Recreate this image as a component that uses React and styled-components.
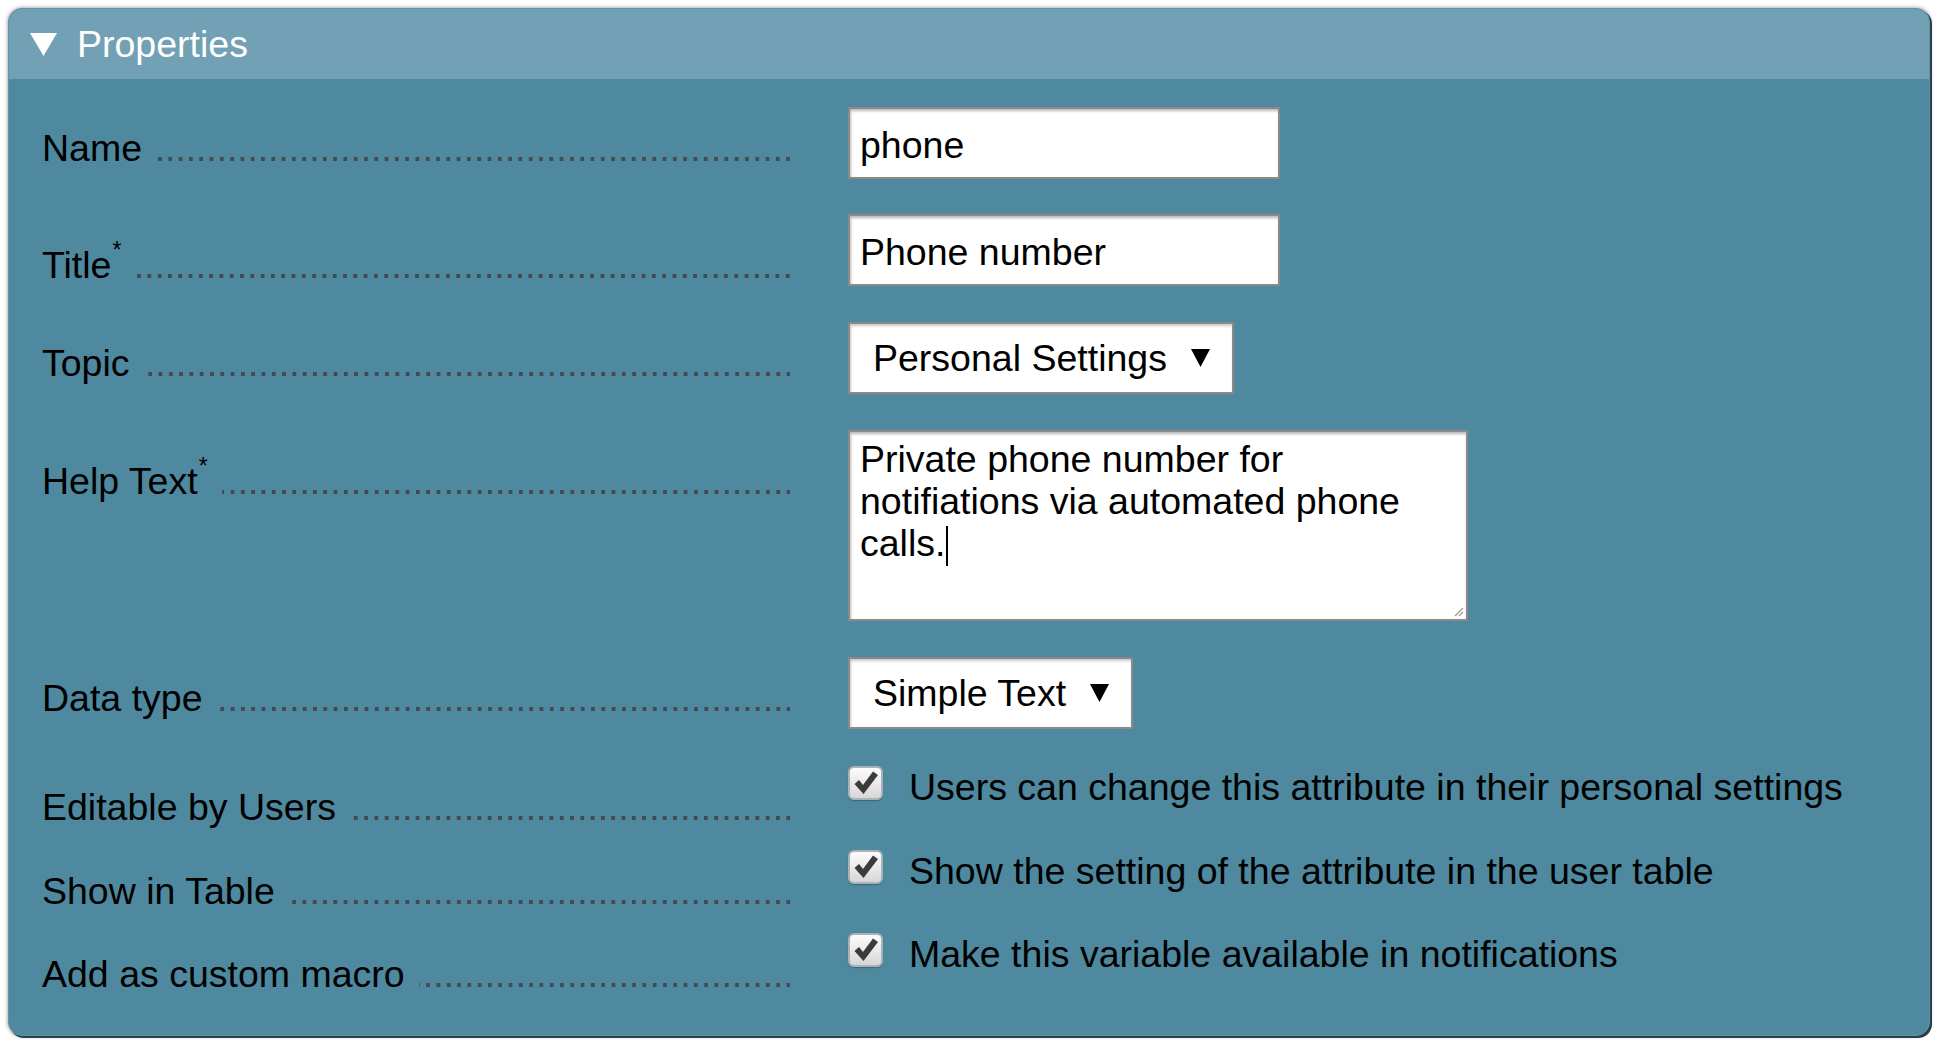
import styled, { createGlobalStyle } from 'styled-components';

const FONT = `"Liberation Sans", Arial, Helvetica, sans-serif`;

const GlobalStyle = createGlobalStyle`
  html, body {
    margin: 0;
    background: #ffffff;
    font-family: ${FONT};
  }
`;

const Panel = styled.section`
  margin: 8px;
  width: 1922px;
  box-sizing: border-box;
  border-radius: 14px;
  background: #4e899f;
  border: 1px solid #6892a3;
  box-shadow: 2px 2px 0 #24424d, 0 0 4px rgba(0, 0, 0, 0.45);
  overflow: hidden;
`;

const Header = styled.header`
  height: 70px;
  display: flex;
  align-items: center;
  gap: 20px;
  padding-left: 21px;
  background: #72a0b4;
  color: #ffffff;
  font-size: 37.5px;
`;

const Body = styled.div`
  display: flex;
  flex-direction: column;
  padding: 28px 40px 40px 33px;
`;

const Row = styled.div`
  display: flex;
  align-items: flex-start;
  margin-top: ${p => p.$gap || 0}px;
`;

const Label = styled.div`
  width: 748px;
  flex: none;
  display: flex;
  align-items: baseline;
  padding-top: ${p => (p.$starred ? 30 : 20)}px;
  font-size: 37.5px;
  line-height: 42px;
  color: #000;
  white-space: nowrap;
`;

const Star = styled.sup`
  font-size: 23px;
  line-height: 0;
  vertical-align: 20px;
  margin-left: 1px;
`;

const Leader = styled.span`
  flex: 1;
  height: 4px;
  margin-left: 14px;
  background-image: linear-gradient(90deg, transparent 0 6.3px, #444a4d 6.3px);
  background-size: 10.3px 4px;
  background-repeat: repeat-x;
  background-position: right bottom;
`;

const Control = styled.div`
  margin-left: 58px;
`;

const TextInput = styled.input`
  box-sizing: border-box;
  width: 432px;
  height: 72px;
  padding: 4px 10px 0;
  border: 2px solid #8a8a8a;
  background: #fff;
  box-shadow: inset 1px 2px 3px rgba(0, 0, 0, 0.28);
  font-family: ${FONT};
  font-size: 37.5px;
  color: #000;
  outline: none;
`;

const Select = styled.button`
  box-sizing: border-box;
  width: ${p => p.$width}px;
  height: 72px;
  display: flex;
  align-items: center;
  justify-content: space-between;
  padding: 0 22px 0 23px;
  border: 2px solid #8a8a8a;
  background: #fff;
  box-shadow: inset 1px 2px 3px rgba(0, 0, 0, 0.22);
  font-family: ${FONT};
  font-size: 37.5px;
  color: #000;
  cursor: pointer;
`;

const TextArea = styled.div`
  position: relative;
  box-sizing: border-box;
  width: 620px;
  height: 191px;
  padding: 6px 10px;
  border: 2px solid #8a8a8a;
  background: #fff;
  box-shadow: inset 1px 2px 3px rgba(0, 0, 0, 0.28);
  font-size: 37.5px;
  line-height: 42px;
  color: #000;
  white-space: pre-wrap;
`;

const Caret = styled.span`
  display: inline-block;
  width: 2px;
  height: 40px;
  margin-left: 1px;
  background: #000;
  vertical-align: -10px;
`;

const Grip = styled.svg`
  position: absolute;
  right: 2px;
  bottom: 2px;
`;

const CheckRow = styled.label`
  display: flex;
  align-items: flex-start;
  gap: 26px;
  font-size: 37.5px;
  line-height: 42px;
  color: #000;
  white-space: nowrap;
`;

const Box = styled.span`
  box-sizing: border-box;
  width: 35px;
  height: 34px;
  flex: none;
  border: 2px solid #a9b2b6;
  border-radius: 6px;
  background: linear-gradient(180deg, #fbfbfb 0%, #e9e9e9 55%, #d6d6d6 100%);
  box-shadow: 0 1px 1px rgba(0, 0, 0, 0.25);
  display: flex;
  align-items: center;
  justify-content: center;
`;

function Arrow() {
  return (
    <svg width="19" height="18" viewBox="0 0 19 18">
      <polygon points="0,0 19,0 9.5,18" fill="#000" />
    </svg>
  );
}

function Check() {
  return (
    <svg width="26" height="26" viewBox="0 0 26 26">
      <path d="M1.5 14 L6 10 L10 15 L20 1.5 L25 5 L10.5 24 Z" fill="#3b3b3b" />
    </svg>
  );
}

function Field({ label, starred, gap, children }) {
  return (
    <Row $gap={gap}>
      <Label $starred={starred}>
        <span>
          {label}
          {starred && <Star>*</Star>}
        </span>
        <Leader />
      </Label>
      <Control>{children}</Control>
    </Row>
  );
}

function CheckField({ label, text, gap }) {
  return (
    <Field label={label} gap={gap}>
      <CheckRow>
        <Box><Check /></Box>
        {text}
      </CheckRow>
    </Field>
  );
}

export default function App() {
  return (
    <>
      <GlobalStyle />
      <Panel>
        <Header>
          <svg width="27" height="23" viewBox="0 0 27 23">
            <polygon points="0,0 27,0 13.5,23" fill="#fff" />
          </svg>
          Properties
        </Header>
        <Body>
          <Field label="Name">
            <TextInput readOnly value="phone" />
          </Field>
          <Field label="Title" starred gap={35}>
            <TextInput readOnly value="Phone number" />
          </Field>
          <Field label="Topic" gap={36}>
            <Select type="button" $width={386}>
              Personal Settings <Arrow />
            </Select>
          </Field>
          <Field label="Help Text" starred gap={36}>
            <TextArea>
              {'Private phone number for\nnotifiations via automated phone\ncalls.'}
              <Caret />
              <Grip width="12" height="12" viewBox="0 0 12 12">
                <path d="M11 3 L3 11 M11 7 L7 11" stroke="#9a9a9a" strokeWidth="1.2" />
              </Grip>
            </TextArea>
          </Field>
          <Field label="Data type" gap={36}>
            <Select type="button" $width={285}>
              Simple Text <Arrow />
            </Select>
          </Field>
          <CheckField
            label="Editable by Users"
            gap={37}
            text="Users can change this attribute in their personal settings"
          />
          <CheckField
            label="Show in Table"
            gap={22}
            text="Show the setting of the attribute in the user table"
          />
          <CheckField
            label="Add as custom macro"
            gap={21}
            text="Make this variable available in notifications"
          />
        </Body>
      </Panel>
    </>
  );
}
